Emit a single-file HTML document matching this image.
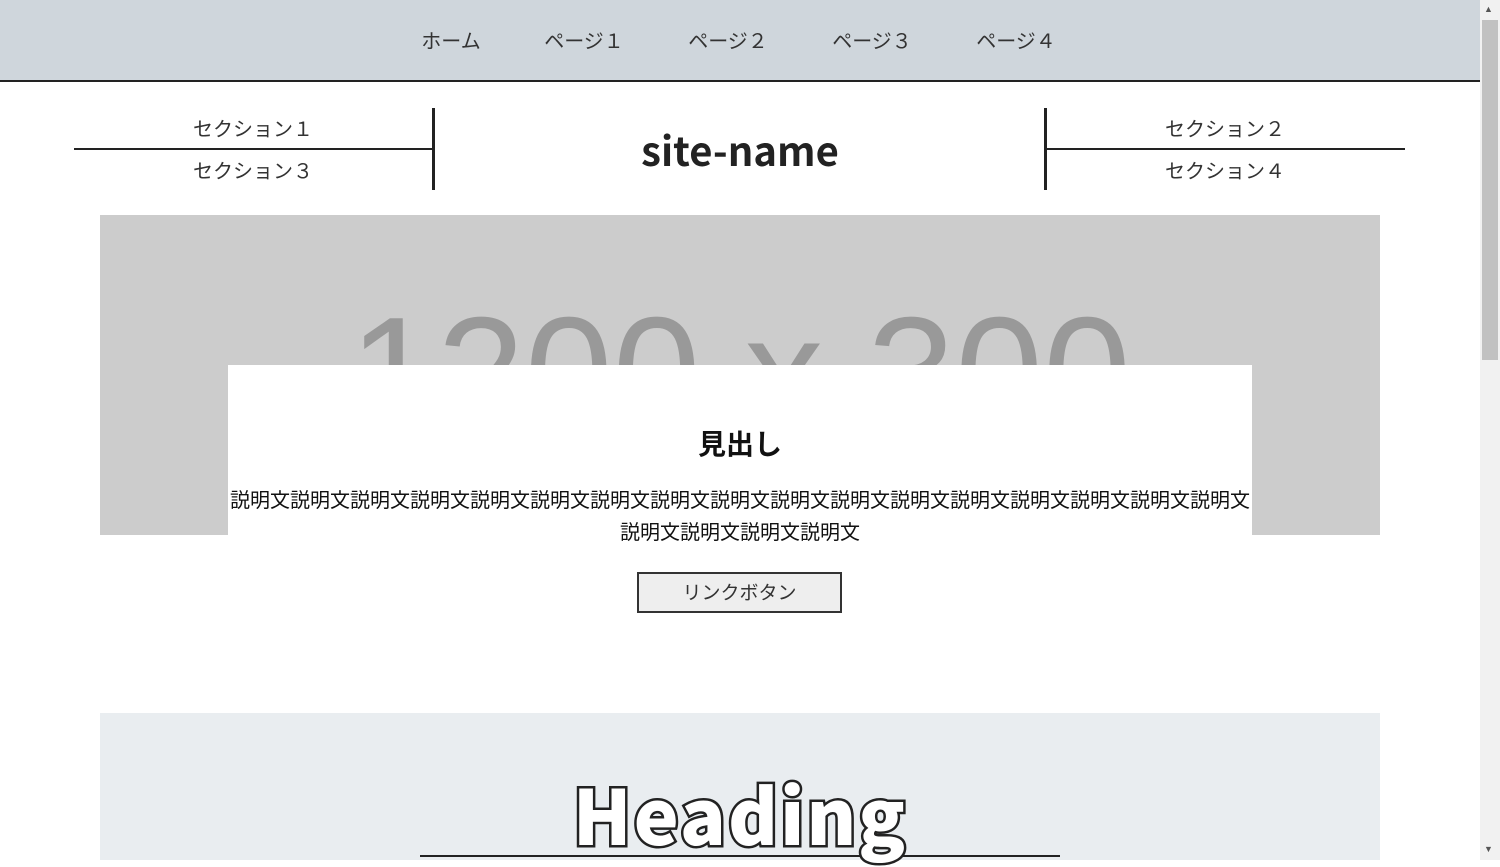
<!DOCTYPE html>
<html><head><meta charset="utf-8"><style>
*{margin:0;padding:0;box-sizing:border-box}
body{width:1500px;height:860px;overflow:hidden;background:#fff;font-family:"Liberation Sans","Noto Sans CJK JP",sans-serif;color:#222;position:relative}
.abs{position:absolute}
.nav{left:0;top:0;width:1480px;height:82px;background:#cfd6dc;border-bottom:2px solid #222}
.nav span{position:absolute;top:26px;font-size:20px;line-height:28px;font-family:"Noto Sans CJK JP",sans-serif;color:#333;transform:translateX(-50%)}
.sb{left:1480px;top:0;width:20px;height:860px;background:#f1f1f1}
.th{left:1482px;top:20px;width:16px;height:340px;background:#c1c1c1}
.sec{font-family:"Noto Sans CJK JP",sans-serif;font-size:20px;line-height:28px;color:#333;text-align:center}
.line{background:#222}
</style></head><body>
<div class="abs nav">
<span style="left:451px">ホーム</span>
<span style="left:584px">ページ１</span>
<span style="left:728px">ページ２</span>
<span style="left:872px">ページ３</span>
<span style="left:1016px">ページ４</span>
</div>
<div class="abs sb"></div><div class="abs th"></div>
<div class="abs" style="left:1484px;top:4px;font-size:9px;color:#555">▲</div>
<div class="abs" style="left:1484px;top:844px;font-size:9px;color:#555">▼</div>

<div class="abs sec" style="left:74px;top:114px;width:358px">セクション１</div>
<div class="abs sec" style="left:74px;top:156px;width:358px">セクション３</div>
<div class="abs line" style="left:74px;top:148px;width:359px;height:2px"></div>
<div class="abs line" style="left:432px;top:108px;width:3px;height:82px"></div>
<div class="abs sec" style="left:1046px;top:114px;width:358px">セクション２</div>
<div class="abs sec" style="left:1046px;top:156px;width:358px">セクション４</div>
<div class="abs line" style="left:1045px;top:148px;width:360px;height:2px"></div>
<div class="abs line" style="left:1044px;top:108px;width:3px;height:82px"></div>
<div class="abs" style="left:440px;top:123px;width:600px;text-align:center;font-family:'Noto Sans CJK JP',sans-serif;font-weight:bold;font-size:40px;line-height:52px;color:#222">site-name</div>

<div class="abs" style="left:100px;top:215px;width:1280px;height:320px;background:#ccc;overflow:hidden">
<div style="position:absolute;left:0;top:79px;width:1280px;text-align:center;font-size:158px;line-height:158px;white-space:nowrap;color:#999;font-family:'Liberation Sans',sans-serif">1200 x 300</div>
</div>
<div class="abs" style="left:228px;top:365px;width:1024px;height:190px;background:#fff"></div>
<div class="abs" style="left:228px;top:423px;width:1024px;text-align:center;font-family:'Noto Sans CJK JP',sans-serif;font-weight:bold;font-size:28px;line-height:40px;color:#111">見出し</div>
<div class="abs" style="left:228px;top:483px;width:1024px;text-align:center;font-family:'Noto Sans CJK JP',sans-serif;font-size:20px;line-height:32px;color:#111">説明文説明文説明文説明文説明文説明文説明文説明文説明文説明文説明文説明文説明文説明文説明文説明文説明文<br>説明文説明文説明文説明文</div>
<div class="abs" style="left:637px;top:572px;width:205px;height:41px;background:#eee;border:2px solid #333;text-align:center;font-family:'Noto Sans CJK JP',sans-serif;font-size:19px;line-height:36px;color:#333">リンクボタン</div>

<div class="abs" style="left:100px;top:713px;width:1280px;height:147px;background:#e9edf0"></div>
<div class="abs line" style="left:420px;top:855px;width:640px;height:2px"></div>
<div class="abs" style="left:440px;top:764px;width:600px;text-align:center;font-family:'Noto Sans CJK JP',sans-serif;font-weight:900;font-size:76px;line-height:96px;color:#fff;-webkit-text-stroke:5px #222;paint-order:stroke fill;letter-spacing:2px">Heading</div>
</body></html>
